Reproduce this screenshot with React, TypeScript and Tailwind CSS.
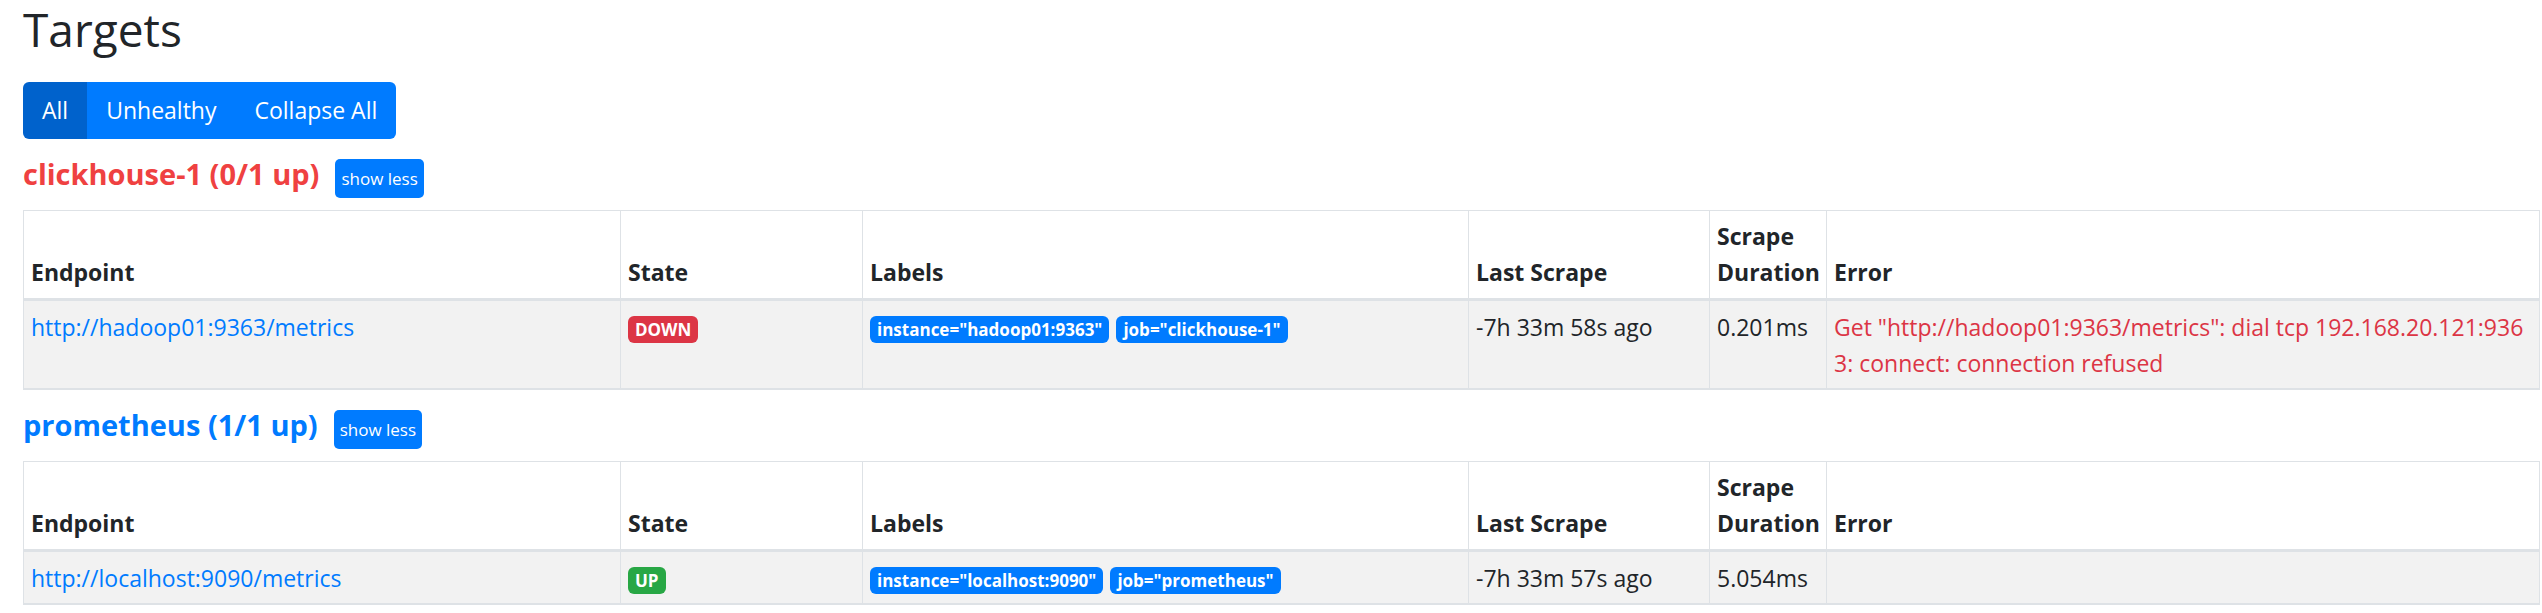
import React from 'react';

interface Target {
  endpoint: string;
  health: 'up' | 'down';
  labels: { name: string; value: string }[];
  lastScrape: string;
  duration: string;
  error?: string[];
}

interface Pool {
  name: string;
  up: number;
  total: number;
  targets: Target[];
}

const pools: Pool[] = [
  {
    name: 'clickhouse-1',
    up: 0,
    total: 1,
    targets: [
      {
        endpoint: 'http://hadoop01:9363/metrics',
        health: 'down',
        labels: [
          { name: 'instance', value: 'hadoop01:9363' },
          { name: 'job', value: 'clickhouse-1' },
        ],
        lastScrape: '-7h 33m 58s ago',
        duration: '0.201ms',
        // the browser broke this one mid-number, keep it that way
        error: ['Get "http://hadoop01:9363/metrics": dial tcp 192.168.20.121:936', '3: connect: connection refused'],
      },
    ],
  },
  {
    name: 'prometheus',
    up: 1,
    total: 1,
    targets: [
      {
        endpoint: 'http://localhost:9090/metrics',
        health: 'up',
        labels: [
          { name: 'instance', value: 'localhost:9090' },
          { name: 'job', value: 'prometheus' },
        ],
        lastScrape: '-7h 33m 57s ago',
        duration: '5.054ms',
      },
    ],
  },
];

const th = 'border border-[#dee2e6] border-b-[3px] px-[7px] pt-[7px] pb-[8px] text-left align-bottom font-bold';
const td = 'border border-[#dee2e6] border-b-2 px-[7px] pt-[8px] pb-[7px] align-top';

const PoolPanel = ({ pool }: { pool: Pool }) => {
  const healthy = pool.up === pool.total;
  return (
    <div className="mt-[20px]">
      <div className="flex items-baseline gap-[16px]">
        <h3 className={`text-[29px] leading-[30px] font-bold ${healthy ? 'text-[#007bff]' : 'text-[#ef4141]'}`}>
          {pool.name} ({pool.up}/{pool.total} up)
        </h3>
        <button className="h-[39px] rounded-[5px] bg-[#007bff] px-[6px] py-[6px] text-[17px] leading-[27px] text-white">
          show less
        </button>
      </div>
      <table className="mt-[12px] w-[2516px] table-fixed text-[23px] leading-[36px] text-[#212529]">
        <colgroup>
          <col className="w-[597px]" />
          <col className="w-[242px]" />
          <col className="w-[606px]" />
          <col className="w-[241px]" />
          <col className="w-[117px]" />
          <col className="w-[713px]" />
        </colgroup>
        <thead>
          <tr>
            <th className={th}>Endpoint</th>
            <th className={th}>State</th>
            <th className={th}>Labels</th>
            <th className={th}>Last Scrape</th>
            <th className={th}>Scrape Duration</th>
            <th className={th}>Error</th>
          </tr>
        </thead>
        <tbody>
          {pool.targets.map((t) => (
            <tr key={t.endpoint} className="bg-[#f2f2f2]">
              <td className={td}>
                <a href="#" className="text-[#007bff]">
                  {t.endpoint}
                </a>
              </td>
              <td className={td}>
                <span
                  className={`inline-block rounded-[6px] px-[7px] py-[5px] align-baseline text-[17px] leading-none font-bold text-white ${
                    t.health === 'up' ? 'bg-[#28a745]' : 'bg-[#dc3545]'
                  }`}
                >
                  {t.health.toUpperCase()}
                </span>
              </td>
              <td className={td}>
                {t.labels.map((l) => (
                  <span
                    key={l.name}
                    className="mr-[7px] inline-block rounded-[6px] bg-[#007bff] px-[7px] py-[5px] align-baseline text-[17px] leading-none font-bold text-white"
                  >
                    {l.name}="{l.value}"
                  </span>
                ))}
              </td>
              <td className={td}>{t.lastScrape}</td>
              <td className={td}>{t.duration}</td>
              <td className={`${td} text-[#dc3545]`}>
                {t.error?.map((line) => (
                  <span key={line} className="block">
                    {line}
                  </span>
                ))}
              </td>
            </tr>
          ))}
        </tbody>
      </table>
    </div>
  );
};

export default function App() {
  return (
    <div className="min-h-screen bg-white pl-[23px] text-[#212529]" style={{ fontFamily: '"Open Sans", sans-serif' }}>
      <h2 className="text-[46px] leading-[58px] font-normal">Targets</h2>
      <div className="mt-[24px] inline-flex h-[57px] overflow-hidden rounded-[6px] text-[23px] text-white">
        <button className="bg-[#0062cc] px-[19px]">All</button>
        <button className="bg-[#007bff] px-[19px]">Unhealthy</button>
        <button className="bg-[#007bff] px-[19px]">Collapse All</button>
      </div>
      {pools.map((p, i) => (
        <div key={p.name} className={i > 0 ? 'mt-[1px]' : ''}>
          <PoolPanel pool={p} />
        </div>
      ))}
    </div>
  );
}
